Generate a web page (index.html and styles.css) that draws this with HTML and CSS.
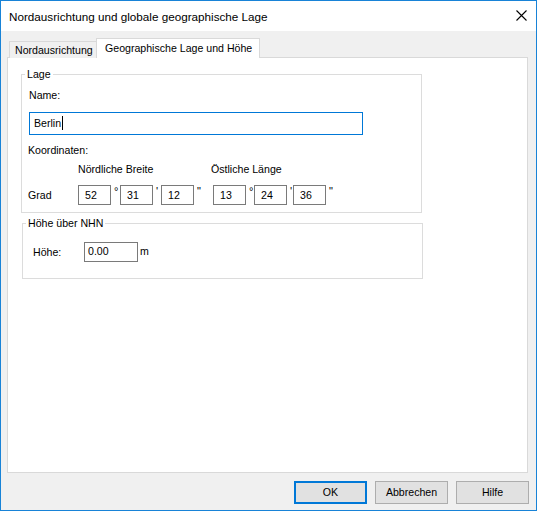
FILE: index.html
```html
<!DOCTYPE html>
<html lang="de">
<head>
<meta charset="utf-8">
<title>Nordausrichtung und globale geographische Lage</title>
<link rel="stylesheet" href="styles.css">
</head>
<body>
<div class="window">
  <div class="titlebar">
    <span class="title">Nordausrichtung und globale geographische Lage</span>
    <svg class="close" width="11" height="11" viewBox="0 0 11 11"><path d="M0.5 0.5 L10.5 10.5 M10.5 0.5 L0.5 10.5" stroke="#000" stroke-width="1.1" fill="none"/></svg>
  </div>
  <div class="body">
    <div class="tabs">
      <div class="tab">Nordausrichtung</div>
      <div class="tab active">Geographische Lage und Höhe</div>
    </div>
    <div class="panel">
      <fieldset class="group lage">
        <legend>Lage</legend>
        <div class="label name-label">Name:</div>
        <div class="field name-field">Berlin<span class="caret"></span></div>
        <div class="label coord-label">Koordinaten:</div>
        <div class="coord-head"><span class="head-n">Nördliche Breite</span><span class="head-e">Östliche Länge</span></div>
        <div class="coord-row">
          <span class="grad">Grad</span>
          <div class="num">52</div><span class="sym s1">°</span>
          <div class="num">31</div><span class="sym s2">'</span>
          <div class="num">12</div><span class="sym s3">"</span>
          <div class="num">13</div><span class="sym s4">°</span>
          <div class="num">24</div><span class="sym s5">'</span>
          <div class="num">36</div><span class="sym s6">"</span>
        </div>
      </fieldset>
      <fieldset class="group hoehe">
        <legend>Höhe über NHN</legend>
        <div class="hoehe-row">
          <span class="hoehe-label">Höhe:</span>
          <div class="num wide">0.00</div>
          <span class="unit">m</span>
        </div>
      </fieldset>
    </div>
    <div class="buttons">
      <div class="btn default">OK</div>
      <div class="btn">Abbrechen</div>
      <div class="btn">Hilfe</div>
    </div>
  </div>
</div>
</body>
</html>
```
FILE: styles.css
```css
* { box-sizing: border-box; }
html, body { margin: 0; padding: 0; background: #ffffff; }
body {
  font-family: "Liberation Sans", Arial, sans-serif;
  font-size: 10.6px;
  line-height: 13px;
  color: #000;
}
.window {
  width: 537px;
  height: 511px;
  border: 1px solid #1883d7;
  background: #f0f0f0;
  display: flex;
  flex-direction: column;
}
.titlebar {
  height: 30px;
  background: #fff;
  display: flex;
  align-items: center;
  padding-left: 8px;
  padding-right: 9px;
}
.title {
  flex: 1;
  font-size: 11.7px;
  line-height: 16px;
  margin-top: 1px;
}
.close { display: block; margin-top: -1px; }
.body {
  flex: 1;
  display: flex;
  flex-direction: column;
  padding: 7px 8px 6px 6px;
}
.tabs {
  display: flex;
  align-items: flex-end;
  height: 20px;
  margin-left: 2px;
  margin-bottom: -1px;
  position: relative;
  z-index: 1;
}
.tab {
  height: 17px;
  border: 1px solid #d9d9d9;
  border-right: none;
  border-bottom: none;
  background: #f0f0f0;
  padding: 2px 0 0 5px;
  white-space: nowrap;
  overflow: hidden;
  width: 88px;
}
.tab.active {
  height: 20px;
  width: 164px;
  background: #fff;
  border-right: 1px solid #d9d9d9;
  margin-left: -1px;
  padding: 3px 0 0 8px;
}
.panel {
  flex: 1;
  background: #fff;
  border: 1px solid #d9d9d9;
  padding: 10px 0 0 13px;
  display: flex;
  flex-direction: column;
}
.group {
  margin: 0;
  padding: 0 0 0 7px;
  border: 1px solid #dcdcdc;
  width: 401px;
  min-width: 0;
}
.group legend {
  padding: 0 2px;
  margin-left: -4px;
  line-height: 13px;
}
.label { white-space: nowrap; }
.name-label { margin-top: 8px; margin-left: 0; }
.field {
  height: 23px;
  border: 1px solid #0078d7;
  background: #fff;
  padding: 4px 0 0 4px;
  display: flex;
  align-items: flex-start;
}
.name-field { width: 334px; margin-top: 10px; }
.caret {
  display: inline-block;
  width: 1px;
  height: 14px;
  background: #000;
  margin-left: 1px;
  margin-top: -1px;
}
.coord-label { margin-top: 9px; margin-left: -1px; }
.coord-head { margin-top: 6px; display: flex; }
.head-n { margin-left: 49px; width: 133px; }
.coord-row {
  display: flex;
  align-items: center;
  margin-top: 9px;
  margin-bottom: 7px;
}
.grad { width: 49px; margin-left: -1px; margin-right: 1px; }
.num {
  width: 33px;
  height: 20px;
  border: 1px solid #7a7a7a;
  background: #fff;
  padding: 3px 0 0 6px;
}
.sym {
  align-self: flex-start;
  padding-left: 3px;
  line-height: 13px;
  font-size: 11px;
  margin-top: 0;
}
.s1 { width: 9px; }
.s2 { width: 8px; }
.s3 { width: 19px; }
.s4 { width: 8px; }
.s5 { width: 6px; }
.s6 { width: 8px; }
.hoehe { margin-top: 4px; margin-left: 1px; }
.hoehe-row {
  display: flex;
  align-items: center;
  margin-top: 12px;
  margin-bottom: 16px;
}
.hoehe-label { width: 51px; margin-left: 3px; }
.num.wide { width: 54px; padding-left: 3px; padding-top: 2px; }
.unit { margin-left: 2px; align-self: flex-start; margin-top: 3px; }
.buttons {
  display: flex;
  justify-content: flex-end;
  gap: 8px;
  margin-top: 8px;
  margin-right: -1px;
}
.btn {
  width: 73px;
  height: 23px;
  border: 1px solid #adadad;
  background: #e1e1e1;
  display: flex;
  align-items: center;
  justify-content: center;
}
.btn.default { border: 2px solid #0078d7; }
```
